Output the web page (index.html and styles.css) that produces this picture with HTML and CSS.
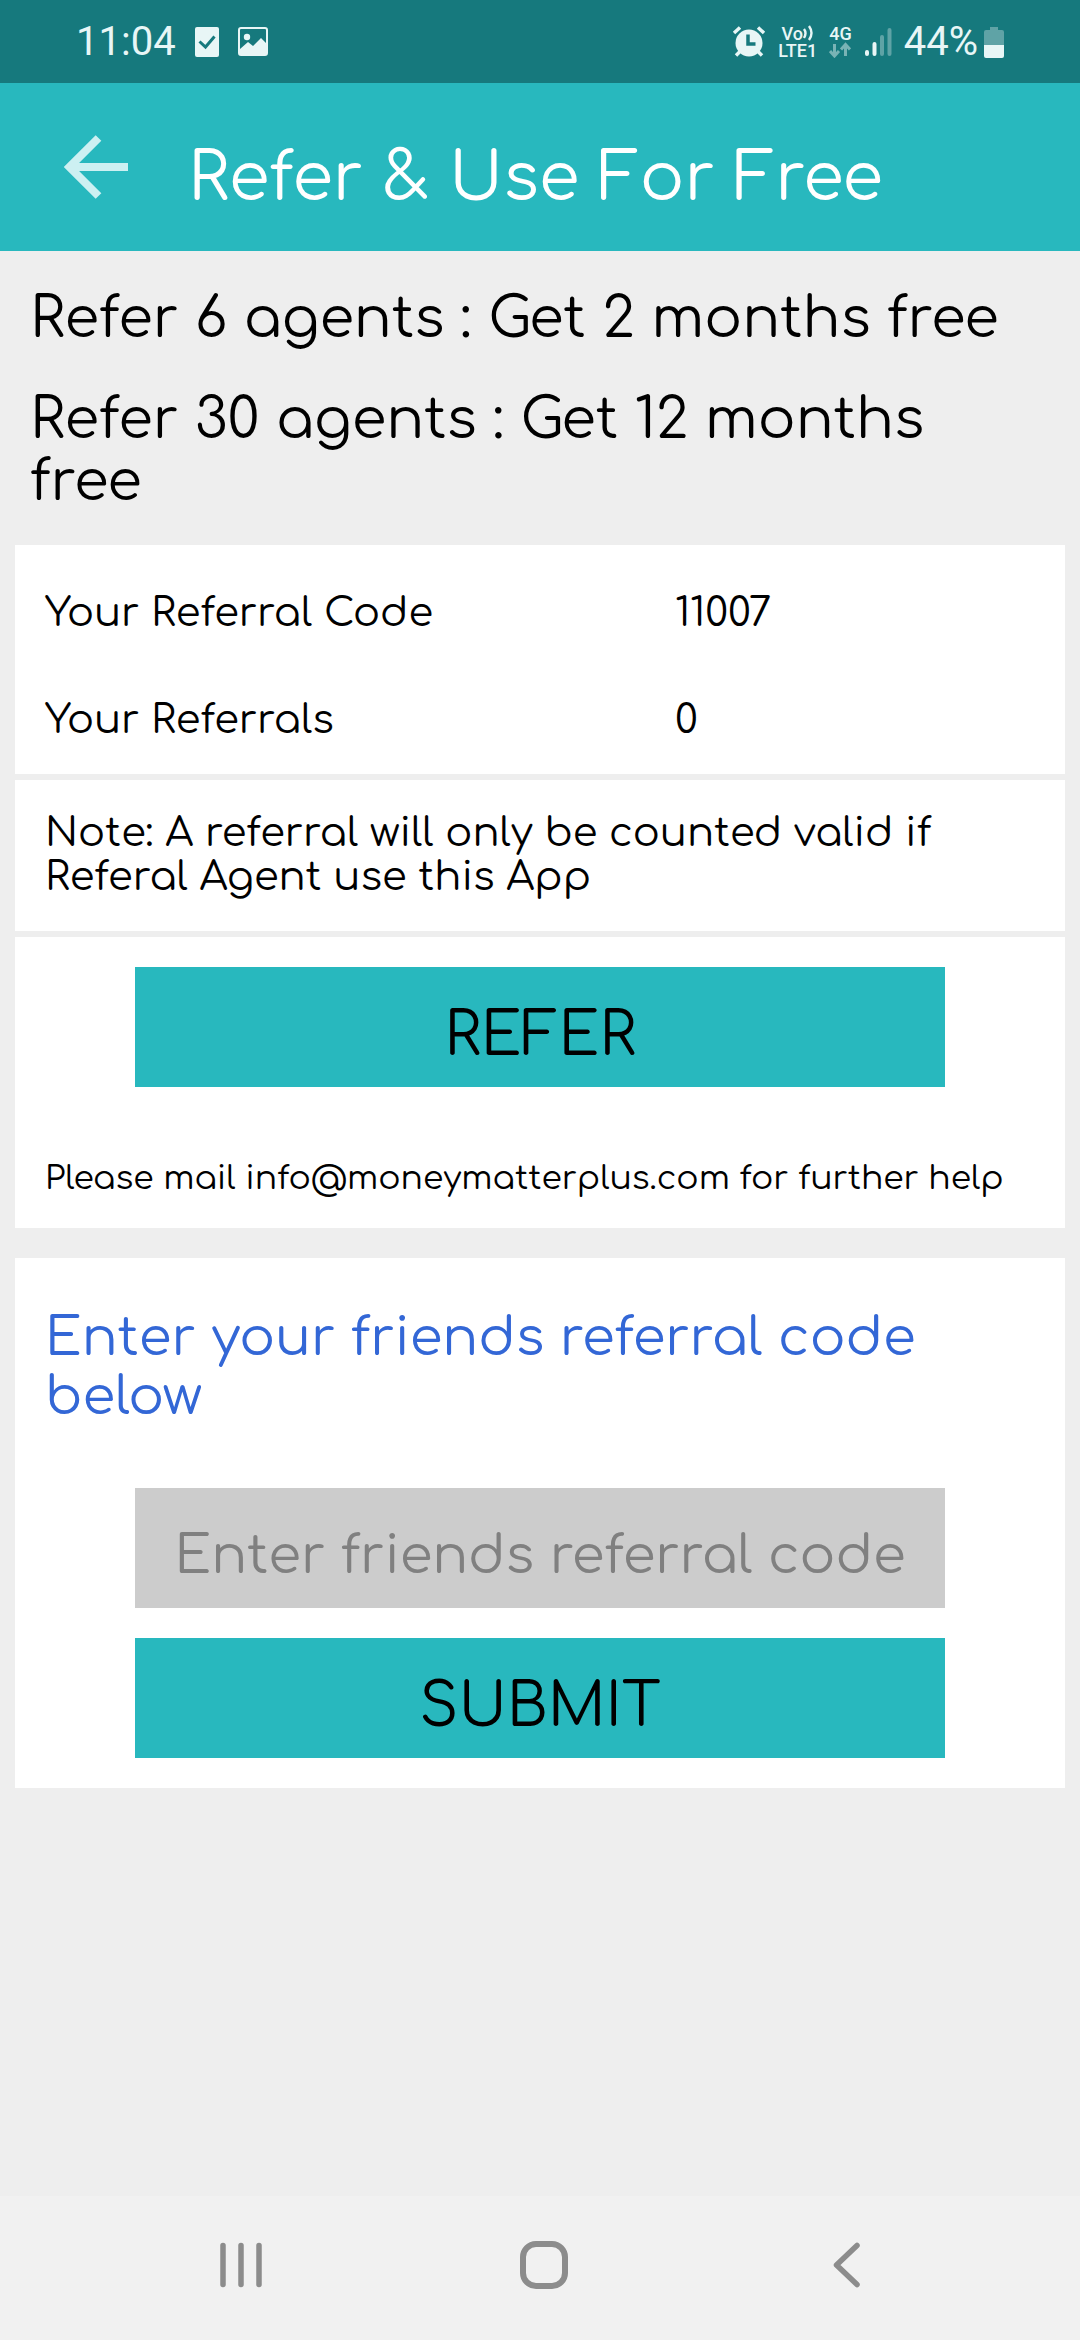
FILE: index.html
```html
<!DOCTYPE html>
<html lang="en">
<head>
<meta charset="utf-8">
<meta name="viewport" content="width=device-width, initial-scale=1">
<title>Refer &amp; Use For Free</title>
<link rel="stylesheet" href="styles.css">
</head>
<body>
<div class="screen">
  <div class="status-bar">
    <div class="status-left">
      <span class="clock">11:04</span>
      <svg width="24" height="30" viewBox="0 0 24 30"><rect width="24" height="30" rx="2" fill="#e8f6f6"/><path d="M4.500 14.500l6 5.500 9-10.500" fill="none" stroke="#16797d" stroke-width="3"/></svg>
      <svg width="30" height="30" viewBox="0 0 30 30"><rect x="1" y="1" width="28" height="27" rx="2" fill="none" stroke="#e8f6f6" stroke-width="2"/><circle cx="9" cy="10" r="3.200" fill="#e8f6f6"/><path d="M2 22l8-7 5 4 8-8 6 6v11H2z" fill="#e8f6f6"/></svg>
    </div>
    <div class="status-right">
      <svg width="34" height="32" viewBox="0 0 34 32"><circle cx="17" cy="17" r="13.500" fill="#e8f6f6"/><path d="M2 7l6-5.500M32 7l-6-5.500M4 29.500l5-5M30 29.500l-5-5" stroke="#e8f6f6" stroke-width="3.500"/><path d="M16 8.500v9.500h7.500" fill="none" stroke="#16797d" stroke-width="3.500"/></svg>
      <span class="network volte">
        <span class="volte-top">Vo<svg width="11" height="16" viewBox="0 0 11 16"><path d="M1 4q3 4 0 9M6 1q5 7 0 14" fill="none" stroke="#e8f6f6" stroke-width="2.400"/></svg></span>
        <span>LTE1</span>
      </span>
      <span class="network data">
        <span>4G</span>
        <svg width="22" height="16" viewBox="0 0 22 16"><path d="M5.500 2v11M1 9l4.500 5L10 9M16.500 14V3M12 7.500l4.500-5 4.500 5" fill="none" stroke="#79b3b5" stroke-width="3"/></svg>
      </span>
      <svg width="28" height="30" viewBox="0 0 28 30"><g fill="none" stroke-width="4" stroke-linecap="round"><path d="M3 25v2M10.500 17v10" stroke="#e8f6f6"/><path d="M18 10v17M25.500 3v24" stroke="#5fa3a6"/></g></svg>
      <span class="battery"><span>44%</span>
      <svg width="20" height="32" viewBox="0 0 20 32"><path d="M6 1h8v3h4q2 0 2 2v14H0V6q0-2 2-2h4z" fill="#5fa3a6"/><path d="M0 19h20v11q0 2-2 2H2q-2 0-2-2z" fill="#e8f6f6"/></svg></span>
    </div>
  </div>

  <header class="app-bar">
    <button class="back" aria-label="Back"><svg width="64" height="64" viewBox="0 0 64 64"><path d="M64 32H8M34.500 3L5.500 32l29 29" fill="none" stroke="#cdf0f2" stroke-width="8"/></svg></button>
    <h1>Refer &amp; Use For Free</h1>
  </header>

  <main>
    <section class="offers">
      <p>Refer 6 agents : Get 2 months free</p>
      <p>Refer 30 agents : Get 12 months free</p>
    </section>

    <div class="cards">
      <dl class="card stats">
        <dt>Your Referral Code</dt><dd>11007</dd>
        <dt>Your Referrals</dt><dd>0</dd>
      </dl>
      <p class="card note">Note: A referral will only be counted valid if Referal Agent use this App</p>
      <section class="card share">
        <button class="action">REFER</button>
        <p class="help">Please mail info@moneymatterplus.com for further help</p>
      </section>
    </div>

    <form class="card redeem">
      <label for="code">Enter your friends referral code below</label>
      <input id="code" type="text" placeholder="Enter friends referral code">
      <button class="action" type="button">SUBMIT</button>
    </form>
  </main>

  <nav class="nav-bar">
    <button aria-label="Recent apps"><svg width="48" height="48" viewBox="0 0 48 48"><path d="M6 4.500v39M24 4.500v39M42 4.500v39" stroke="#8c8c8c" stroke-width="5.500" stroke-linecap="round"/></svg></button>
    <button aria-label="Home"><svg width="48" height="48" viewBox="0 0 48 48"><rect x="3" y="3" width="42" height="42" rx="13" fill="none" stroke="#8c8c8c" stroke-width="6"/></svg></button>
    <button aria-label="Back"><svg width="48" height="48" viewBox="0 0 48 48"><path d="M35 4.500L14.500 24 35 43.500" fill="none" stroke="#8c8c8c" stroke-width="5.500" stroke-linecap="round" stroke-linejoin="round"/></svg></button>
  </nav>
</div>
</body>
</html>
```
FILE: styles.css
```css
* { box-sizing: border-box; }

body {
  margin: 0;
  background: #eeeeee;
  color: #000;
  font-family: Comfortaa, Inter, "Open Sans", sans-serif;
  font-weight: 400;
}

h1, p, dl, dd { margin: 0; }
svg { display: block; flex: none; }

button, input {
  border: 0;
  border-radius: 0;
  padding: 0;
  font: inherit;
  color: inherit;
}

.screen {
  display: flex;
  flex-direction: column;
  min-height: 100vh;
}

/* System status bar */
.status-bar {
  display: flex;
  justify-content: space-between;
  height: 83px;
  padding: 0 76px;
  background: #16797d;
  color: #e8f6f6;
  font-family: Roboto, sans-serif;
  font-size: 40px;
  font-weight: 400;
}
.status-left, .status-right { display: flex; align-items: center; }
.status-left { gap: 19px; }
.status-right { gap: 12px; }
.network {
  display: flex;
  flex-direction: column;
  align-items: center;
  font-size: 18px;
  font-weight: 500;
  line-height: 17px;
}
.volte-top { display: flex; }
.battery { display: flex; align-items: center; gap: 6px; }

/* App bar */
.app-bar {
  display: flex;
  align-items: center;
  gap: 60px;
  height: 168px;
  padding: 0 64px;
  background: #28b8be;
  color: #fff;
}
.back { background: none; }
.app-bar h1 {
  padding-top: 23px;
  font-size: 66px;
  font-weight: 400;
  line-height: 80px;
}

main { flex: 1; }

.offers {
  display: grid;
  gap: 39px;
  padding: 37px 30px 32px;
  font-size: 56px;
  line-height: 62px;
}

.cards { display: grid; gap: 6px; margin-bottom: 30px; }
.card {
  margin: 0 15px;
  padding: 30px;
  background: #fff;
}

.stats {
  display: grid;
  grid-template-columns: 630px 1fr;
  row-gap: 63px;
  padding-top: 46px;
  padding-bottom: 32px;
  font-size: 40px;
  line-height: 44px;
}
.note {
  padding-top: 31px;
  padding-bottom: 32px;
  font-size: 40px;
  line-height: 44px;
}

.action {
  display: block;
  width: 810px;
  max-width: 100%;
  height: 120px;
  margin: 0 auto;
  padding-top: 18px;
  background: #28b8be;
  font-size: 59px;
}

.help { margin-top: 74px; margin-bottom: 1px; font-size: 33px; line-height: 36px; }

.redeem { padding-top: 50px; }
.redeem label {
  display: block;
  font-size: 53px;
  line-height: 59px;
  color: #3367d6;
}
.redeem input {
  display: block;
  width: 810px;
  max-width: 100%;
  height: 120px;
  margin: 62px auto 30px;
  padding: 15px 30px 0;
  background: #ccc;
  font-size: 53px;
  text-align: center;
}
.redeem input::placeholder { color: #808080; opacity: 1; }

/* System navigation bar */
.nav-bar {
  display: flex;
  justify-content: space-between;
  align-items: center;
  height: 144px;
  padding: 0 210px 6px 217px;
  background: #f1f1f1;
}
.nav-bar button { background: none; }
```
